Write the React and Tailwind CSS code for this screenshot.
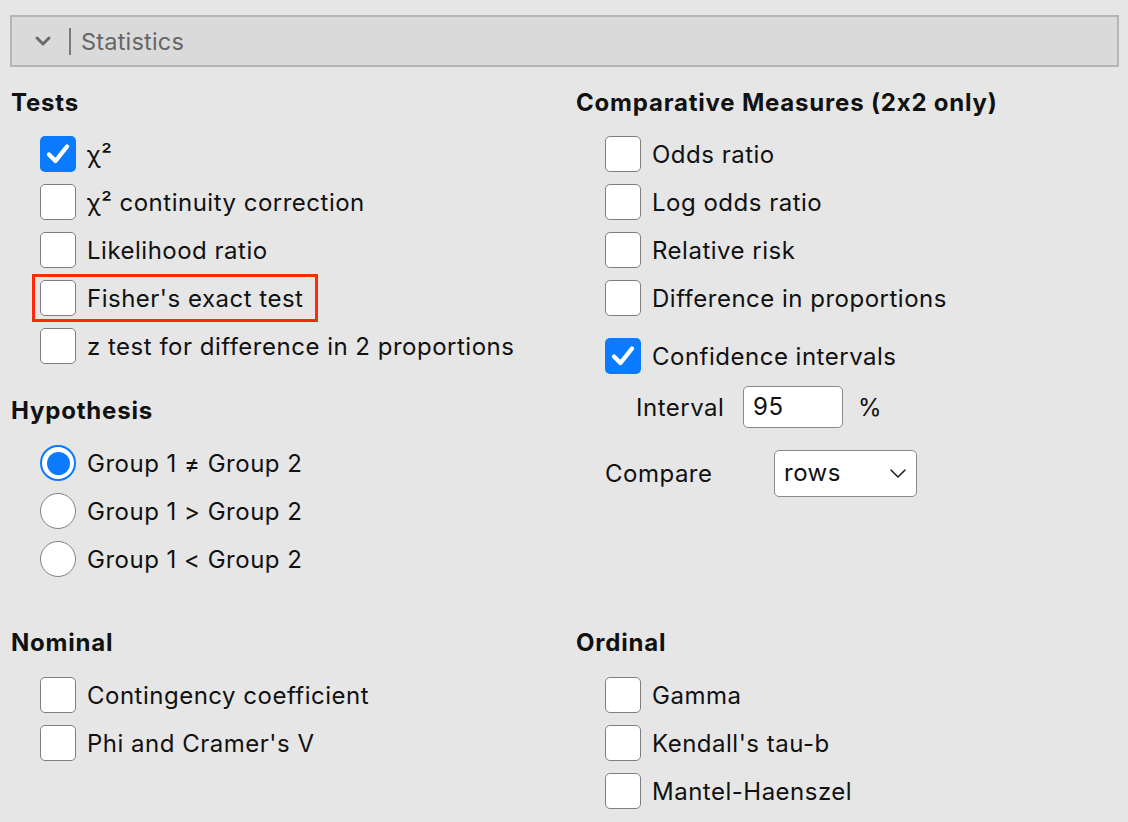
import React from "react";

const font = {
  fontFamily: "Inter, 'Noto Sans', 'Liberation Sans', sans-serif",
  fontFeatureSettings: "'calt' 0",
};

function Box({ checked }) {
  if (checked) {
    return (
      <div className="w-[36px] h-[36px] rounded-[5px] bg-[#0a7aff] flex items-center justify-center shrink-0">
        <svg width="26" height="26" viewBox="0 0 26 26">
          <path d="M4 13.5 L10.5 20 L22 5.5" fill="none" stroke="#fff" strokeWidth="4.4" strokeLinecap="round" strokeLinejoin="round" />
        </svg>
      </div>
    );
  }
  return <div className="w-[36px] h-[36px] rounded-[5px] bg-white border-[1.5px] border-[#7f7f7f] shrink-0" />;
}

function Radio({ checked }) {
  if (checked) {
    return (
      <div className="w-[36px] h-[36px] rounded-full border-[2.5px] border-[#0a7aff] bg-white flex items-center justify-center shrink-0">
        <div className="w-[23px] h-[23px] rounded-full bg-[#0a7aff]" />
      </div>
    );
  }
  return <div className="w-[36px] h-[36px] rounded-full bg-white border-[1.5px] border-[#7f7f7f] shrink-0" />;
}

function Item({ label, checked, radio, highlight }) {
  const row = (
    <div className="flex items-center h-[48px] gap-[11px]">
      {radio ? <Radio checked={checked} /> : <Box checked={checked} />}
      <span className="text-[24px] tracking-[0.5px] text-[#111] whitespace-nowrap translate-y-[1px]">{label}</span>
    </div>
  );
  if (highlight) {
    return (
      <div className="relative">
        <div className="absolute left-[-8px] top-0 w-[286px] h-[48px] border-[3px] border-[#ff2a0d]" />
        {row}
      </div>
    );
  }
  return row;
}

function Header({ children }) {
  return <div className="text-[24px] tracking-[0.8px] font-bold text-[#111] h-[30px] leading-[30px] whitespace-nowrap">{children}</div>;
}

export default function App() {
  return (
    <div className="w-[1128px] h-[822px] bg-[#e6e6e6] overflow-hidden" style={font}>
      <div className="pt-[15px] pl-[10px] pr-[9px]">
        <div className="h-[52px] border-2 border-[#b5b5b5] bg-[#dadada] flex items-center">
          <svg className="ml-[22px]" width="18" height="12" viewBox="0 0 18 12">
            <path d="M3 3 L9 9 L15 3" fill="none" stroke="#6a6a6a" strokeWidth="3" strokeLinecap="round" strokeLinejoin="round" />
          </svg>
          <div className="ml-[17px] w-[2px] h-[27px] bg-[#7a7a7a]" />
          <span className="ml-[10px] text-[23.5px] tracking-[0.2px] text-[#666] translate-y-[1px]">Statistics</span>
        </div>
      </div>

      <div className="grid grid-cols-[565px_1fr] mt-[21px] pl-[11px]">
        <div>
          <Header>Tests</Header>
          <div className="mt-[12px] pl-[29px]">
            <Item label="χ²" checked />
            <Item label="χ² continuity correction" />
            <Item label="Likelihood ratio" />
            <Item label="Fisher's exact test" highlight />
            <Item label="z test for difference in 2 proportions" />
          </div>
          <div className="mt-[26px]">
            <Header>Hypothesis</Header>
          </div>
          <div className="mt-[13px] pl-[29px]">
            <Item label="Group 1 ≠ Group 2" radio checked />
            <Item label="Group 1 > Group 2" radio />
            <Item label="Group 1 < Group 2" radio />
          </div>
        </div>
        <div>
          <Header>Comparative Measures (2x2 only)</Header>
          <div className="mt-[12px] pl-[29px]">
            <Item label="Odds ratio" />
            <Item label="Log odds ratio" />
            <Item label="Relative risk" />
            <Item label="Difference in proportions" />
            <div className="mt-[10px]">
              <Item label="Confidence intervals" checked />
            </div>
            <div className="flex items-center h-[44px] mt-[5px] pl-[31px]">
              <span className="text-[24px] tracking-[0.5px] text-[#111] w-[107px] translate-y-[1px]">Interval</span>
              <div className="w-[100px] h-[42px] bg-white border-[1.5px] border-[#8a8a8a] rounded-[5px] flex items-center pl-[9px] text-[24px] tracking-[0.5px] text-[#111]">95</div>
              <span className="ml-[15px] text-[24px] text-[#111] translate-y-[1px]">%</span>
            </div>
            <div className="flex items-center h-[48px] mt-[20px]">
              <span className="text-[24px] tracking-[0.5px] text-[#111] w-[169px] translate-y-[1px]">Compare</span>
              <div className="w-[143px] h-[47px] bg-white border-[1.5px] border-[#8a8a8a] rounded-[5px] flex items-center justify-between pl-[9px] pr-[9px] text-[24px] tracking-[0.5px] text-[#111]">
                <span>rows</span>
                <svg width="18" height="12" viewBox="0 0 18 12">
                  <path d="M2 3 L9 10 L16 3" fill="none" stroke="#222" strokeWidth="1.6" strokeLinecap="round" strokeLinejoin="round" />
                </svg>
              </div>
            </div>
          </div>
        </div>
      </div>

      <div className="grid grid-cols-[565px_1fr] mt-[45px] pl-[11px]">
        <div>
          <Header>Nominal</Header>
          <div className="mt-[13px] pl-[29px]">
            <Item label="Contingency coefficient" />
            <Item label="Phi and Cramer's V" />
          </div>
        </div>
        <div>
          <Header>Ordinal</Header>
          <div className="mt-[13px] pl-[29px]">
            <Item label="Gamma" />
            <Item label="Kendall's tau-b" />
            <Item label="Mantel-Haenszel" />
          </div>
        </div>
      </div>
    </div>
  );
}
